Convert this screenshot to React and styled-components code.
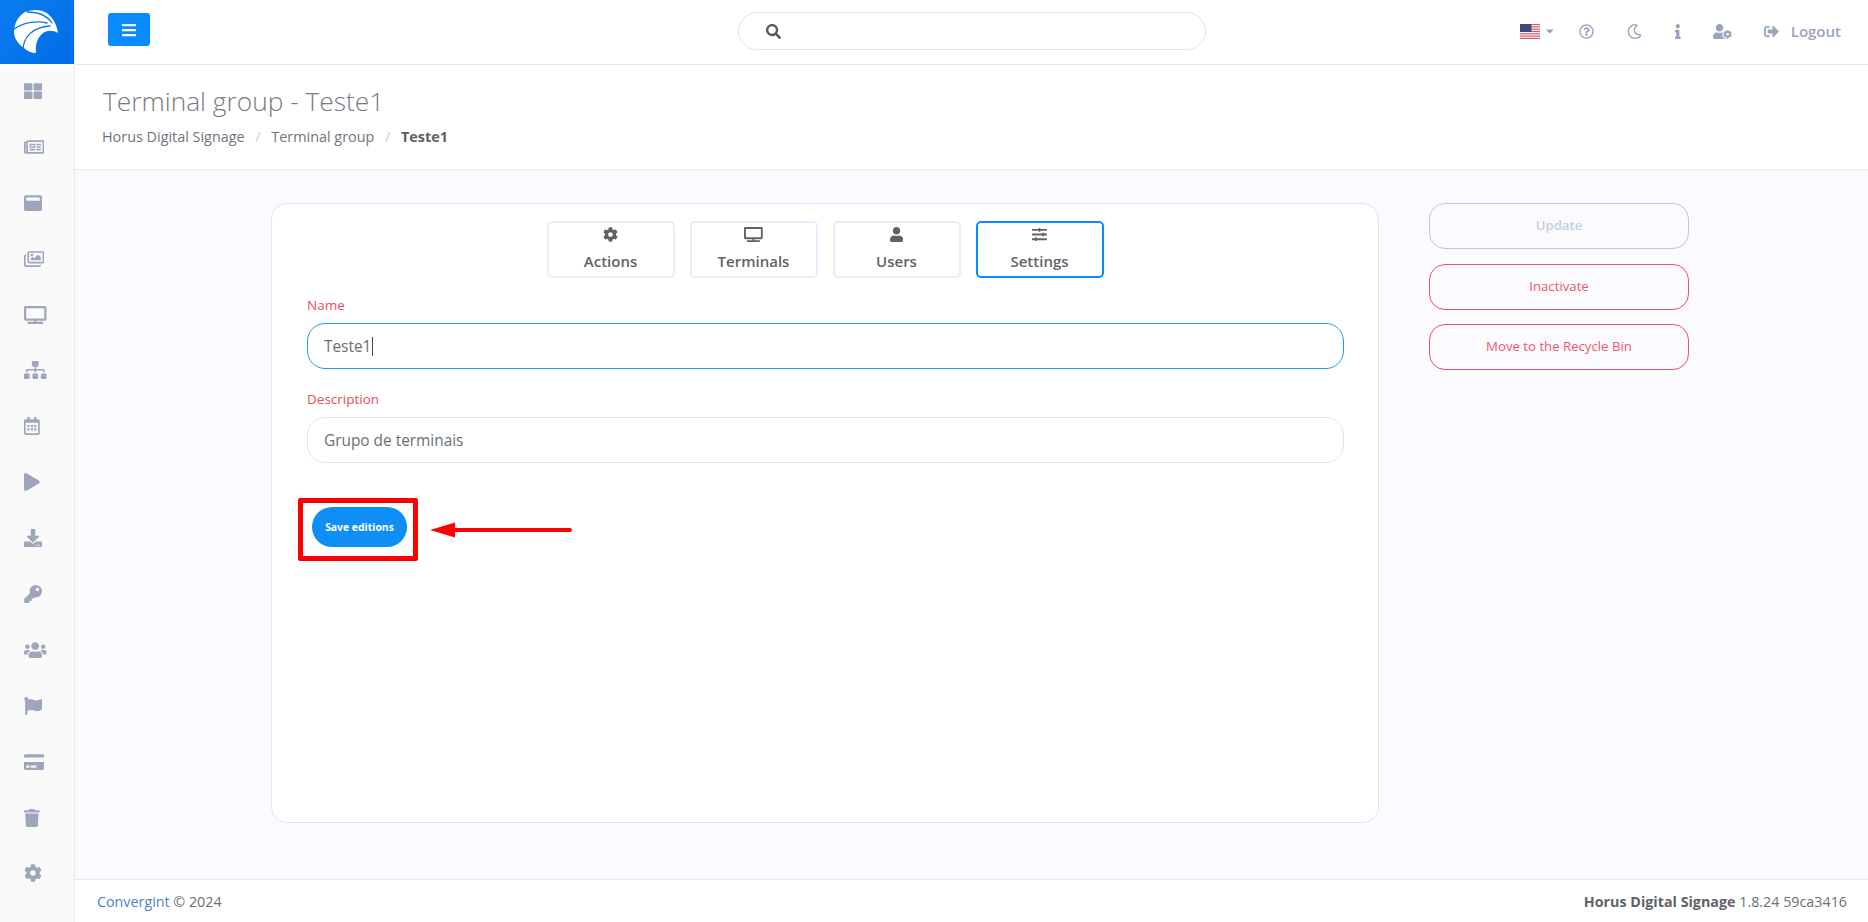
import React from 'react';
import styled, { createGlobalStyle } from 'styled-components';
import {
  FaBars, FaSearch, FaThLarge, FaRegNewspaper, FaWindowMaximize, FaRegImages, FaTv, FaSitemap,
  FaRegCalendarAlt, FaPlay, FaDownload, FaKey, FaUsers, FaFlag, FaCreditCard, FaTrash, FaCog,
  FaRegQuestionCircle, FaRegMoon, FaInfo, FaUserCog, FaSignOutAlt, FaUser, FaSlidersH, FaCaretDown,
} from 'react-icons/fa';

const GlobalStyle = createGlobalStyle`
  html, body { margin: 0; padding: 0; height: 100%; }
  body { font-family: "Open Sans", "Noto Sans", sans-serif; color: #5c6873; background: #fbfbff; }
  * { box-sizing: border-box; }
`;

const Shell = styled.div`
  display: grid;
  grid-template-columns: 75px 1fr;
  grid-template-rows: 65px 1fr;
  height: 922px;
  overflow: hidden;
`;

const Brand = styled.div`
  background: linear-gradient(135deg, #0a7df0, #006de6);
  height: 64px;
  border-right: 1px solid #e8e9ee;
  display: flex;
  align-items: center;
  padding-left: 14px;
`;

const Topbar = styled.header`
  background: #fff;
  border-bottom: 1px solid #e4e7ee;
  position: relative;
  display: flex;
  align-items: center;
  padding: 0 27px 2px 33px;
`;

const MenuButton = styled.button`
  width: 42px;
  height: 33px;
  align-self: flex-start;
  margin-top: 13px;
  border: 0;
  border-radius: 3px;
  background: #0a8aff;
  color: #fff;
  display: flex;
  align-items: center;
  justify-content: center;
  padding: 0;
  svg { height: 16px; width: 14px; }
`;

const Search = styled.div`
  position: absolute;
  left: 663px;
  top: 12px;
  width: 468px;
  height: 38px;
  border: 1px solid #e2e4ea;
  border-radius: 19px;
  display: flex;
  align-items: center;
  padding-left: 27px;
  color: #55595f;
  font-size: 15px;
`;

const TopActions = styled.div`
  margin-left: auto;
  display: flex;
  align-items: center;
  color: #9aa5bc;
`;

const TopIcon = styled.span`
  display: flex;
  align-items: center;
  justify-content: center;
  margin-left: ${(p) => p.$gap}px;
  svg { height: ${(p) => p.$h || 15}px; width: ${(p) => p.$w || 15}px; }
`;

const Logout = styled.span`
  font-size: 15px;
  font-weight: 600;
  margin-left: 12px;
`;

const Sidebar = styled.nav`
  background: #fafafb;
  border-right: 1px solid #e8e9ee;
  display: flex;
  flex-direction: column;
`;

const SideItem = styled.div`
  height: 55.9px;
  flex: none;
  padding: 17px 0 0 24px;
  color: #9ea6bb;
  line-height: 0;
  svg { height: 18px; width: ${(p) => p.$w}px; }
`;

const Main = styled.main`
  display: flex;
  flex-direction: column;
  min-width: 0;
`;

const PageHead = styled.div`
  background: #fff;
  height: 105px;
  border-bottom: 1px solid #e8e9ef;
  padding: 18px 0 0 27px;
`;

const Title = styled.h1`
  margin: 0;
  padding-left: 1px;
  font-size: 26.3px;
  line-height: 36px;
  font-weight: 300;
  color: #777b82;
`;

const Crumbs = styled.div`
  display: flex;
  margin-top: 8px;
  font-size: 14.4px;
  line-height: 19px;
  color: #6f7480;
`;

const Crumb = styled.span`
  font-weight: ${(p) => (p.$current ? 700 : 400)};
  color: ${(p) => (p.$current ? '#5b5f66' : '#6f7480')};
`;

const CrumbSep = styled.span`
  margin: 0 10.7px;
  color: #c8ccd2;
`;

const Content = styled.div`
  flex: 1;
  display: flex;
  align-items: flex-start;
  padding: 33px 0 0 196px;
`;

const Card = styled.section`
  width: 1108px;
  height: 620px;
  background: #fff;
  border: 1px solid #e4e5ea;
  border-radius: 16px;
  padding: 17px 34px 0 35px;
`;

const Tabs = styled.div`
  display: flex;
  justify-content: center;
  gap: 15px;
  margin-left: -1px;
`;

const Tab = styled.div`
  width: 128px;
  height: 57px;
  border: 2px solid ${(p) => (p.$active ? '#0a8aff' : '#e3effb')};
  border-radius: 5px;
  display: flex;
  flex-direction: column;
  align-items: center;
  color: #5f6369;
  font-size: 15px;
  font-weight: 600;
  padding-top: 4px;
  svg { height: 15px; width: ${(p) => p.$w}px; margin-bottom: 10px; flex: none; }
`;

const TabLabel = styled.span`
  line-height: 19px;
`;

const Field = styled.div`
  margin-top: ${(p) => p.$top}px;
`;

const Label = styled.label`
  display: block;
  font-size: 13.5px;
  line-height: 18px;
  color: #e8505f;
  margin-bottom: 9px;
`;

const Input = styled.div`
  height: 46px;
  border: 1px solid ${(p) => (p.$focus ? '#1f9aee' : '#e4e5e9')};
  border-radius: 18px;
  padding: 0 16px;
  display: flex;
  align-items: center;
  font-size: 15.4px;
  color: #6a6f76;
`;

const Caret = styled.span`
  width: 1px;
  height: 19px;
  background: #444;
  margin-left: 1px;
`;

const SaveRow = styled.div`
  display: flex;
  align-items: center;
  margin: 35px 0 0 -9px;
`;

const Highlight = styled.div`
  width: 120px;
  height: 63px;
  border: 5px solid #ff0000;
  border-radius: 2px;
  padding: 4px 0 0 9px;
`;

const SaveButton = styled.button`
  width: 95px;
  height: 40px;
  border: 0;
  border-radius: 20px;
  background: #0f8ff5;
  color: #fff;
  font-family: inherit;
  font-size: 10.4px;
  font-weight: 700;
  padding: 0;
`;

const Arrow = styled.svg`
  margin-left: 12px;
  flex: none;
`;

const SideActions = styled.aside`
  width: 260px;
  margin-left: 50px;
  display: flex;
  flex-direction: column;
  gap: 14.5px;
`;

const ActionButton = styled.button`
  height: 46px;
  background: transparent;
  border: 1px solid ${(p) => (p.$muted ? '#bccad9' : '#ee5165')};
  border-radius: 16px;
  color: ${(p) => (p.$muted ? '#c3cfdc' : '#f0566a')};
  font-family: inherit;
  font-size: 13.2px;
  font-weight: ${(p) => (p.$muted ? 600 : 400)};
  padding: 0 0 2px;
`;

const Footer = styled.footer`
  height: 43px;
  flex: none;
  background: #fff;
  border-top: 1px solid #e8e9ef;
  display: flex;
  align-items: center;
  justify-content: space-between;
  padding: 0 21px 0 22px;
  font-size: 14.3px;
  color: #6b6f75;
`;

const FooterLink = styled.span`
  color: #4a83c4;
`;

const Version = styled.strong`
  font-weight: 700;
  color: #5f6369;
`;

const Logo = () => (
  <svg width="46" height="46" viewBox="14 9 46 46">
    <path
      fill="#fff"
      d="M25 12 C33 9 42 9 48 14 C54 19 57 26 58 33 C53 30 46 30 42 34 C37 38 35 46 36 53 C31 53 27 51 24 48 C18 44 14 38 14 32 C14 24 18 16 25 12 Z"
    />
    <g fill="none" stroke="#0a78ec" strokeWidth="1.3" strokeLinecap="round">
      <path d="M14 29 C22 23 36 20 47 23" />
      <path d="M23 50 C23 38 32 27 50 26" />
      <path d="M27 12 C36 12 46 14 52 23" />
    </g>
  </svg>
);

const UsFlag = () => (
  <svg width="20" height="15" viewBox="0 0 20 15">
    <rect width="20" height="15" fill="#fff" />
    {[0, 2.3, 4.6, 6.9, 9.2, 11.5, 13.8].map((y) => (
      <rect key={y} y={y} width="20" height="1.2" fill="#d25a66" />
    ))}
    <rect width="11.5" height="8" fill="#3f4a7c" />
  </svg>
);

// width of each glyph at 18px high, the icons are not square
const sideIcons = [
  [FaThLarge, 18], [FaRegNewspaper, 20.25], [FaWindowMaximize, 18], [FaRegImages, 20.25],
  [FaTv, 22.5], [FaSitemap, 22.5], [FaRegCalendarAlt, 15.75], [FaPlay, 15.75], [FaDownload, 18],
  [FaKey, 18], [FaUsers, 22.5], [FaFlag, 18], [FaCreditCard, 20.25], [FaTrash, 15.75], [FaCog, 18],
];

const tabs = [
  { label: 'Actions', icon: FaCog, w: 15 },
  { label: 'Terminals', icon: FaTv, w: 18.75 },
  { label: 'Users', icon: FaUser, w: 13.1 },
  { label: 'Settings', icon: FaSlidersH, w: 15, active: true },
];

export default function App() {
  return (
    <>
      <GlobalStyle />
      <Shell>
        <Brand><Logo /></Brand>
        <Topbar>
          <MenuButton><FaBars /></MenuButton>
          <Search><FaSearch /></Search>
          <TopActions>
            <UsFlag />
            <TopIcon $gap={6} $w={7.5} $h={12}><FaCaretDown /></TopIcon>
            <TopIcon $gap={26}><FaRegQuestionCircle /></TopIcon>
            <TopIcon $gap={33}><FaRegMoon /></TopIcon>
            <TopIcon $gap={33} $w={5.6}><FaInfo /></TopIcon>
            <TopIcon $gap={32} $w={18.75}><FaUserCog /></TopIcon>
            <TopIcon $gap={32}><FaSignOutAlt /></TopIcon>
            <Logout>Logout</Logout>
          </TopActions>
        </Topbar>
        <Sidebar>
          {sideIcons.map(([Icon, w], i) => (
            <SideItem key={i} $w={w}><Icon /></SideItem>
          ))}
        </Sidebar>
        <Main>
          <PageHead>
            <Title>Terminal group - Teste1</Title>
            <Crumbs>
              <Crumb>Horus Digital Signage</Crumb>
              <CrumbSep>/</CrumbSep>
              <Crumb>Terminal group</Crumb>
              <CrumbSep>/</CrumbSep>
              <Crumb $current>Teste1</Crumb>
            </Crumbs>
          </PageHead>
          <Content>
            <Card>
              <Tabs>
                {tabs.map(({ label, icon: Icon, w, active }) => (
                  <Tab key={label} $active={active} $w={w}>
                    <Icon />
                    <TabLabel>{label}</TabLabel>
                  </Tab>
                ))}
              </Tabs>
              <Field $top={18}>
                <Label>Name</Label>
                <Input $focus>Teste1<Caret /></Input>
              </Field>
              <Field $top={21}>
                <Label>Description</Label>
                <Input>Grupo de terminais</Input>
              </Field>
              <SaveRow>
                <Highlight><SaveButton>Save editions</SaveButton></Highlight>
                <Arrow width="142" height="16" viewBox="0 0 142 16">
                  <path d="M0 8 L25 0.5 L25 6 L140 6 A2 2 0 0 1 140 10 L25 10 L25 15.5 Z" fill="#ff0000" />
                </Arrow>
              </SaveRow>
            </Card>
            <SideActions>
              <ActionButton $muted>Update</ActionButton>
              <ActionButton>Inactivate</ActionButton>
              <ActionButton>Move to the Recycle Bin</ActionButton>
            </SideActions>
          </Content>
          <Footer>
            <span><FooterLink>Convergint</FooterLink> © 2024</span>
            <span><Version>Horus Digital Signage</Version> 1.8.24 59ca3416</span>
          </Footer>
        </Main>
      </Shell>
    </>
  );
}
